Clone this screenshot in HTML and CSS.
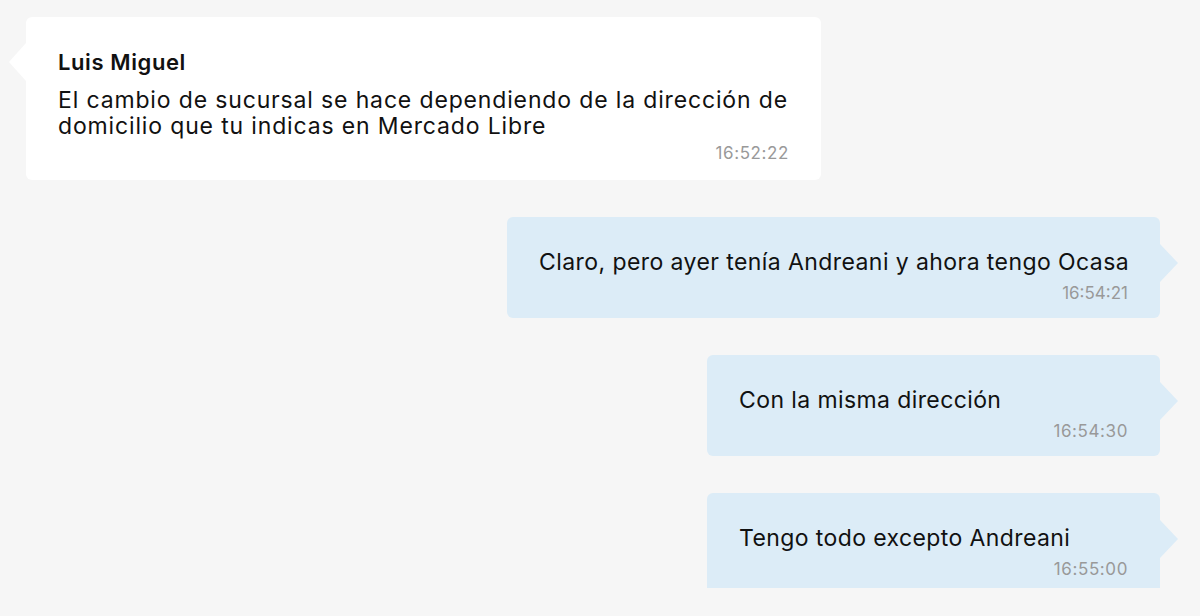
FILE: index.html
```html
<!DOCTYPE html>
<html lang="es">
<head>
    <meta charset="UTF-8">
    <meta name="viewport" content="width=device-width, initial-scale=1.0">
    <title>Conversación</title>
    <link rel="stylesheet" href="styles.css">
</head>
<body>
    <div class="chat">
        <div class="msg msg-in">
            <div class="autor">Luis Miguel</div>
            <div class="texto">El cambio de sucursal se hace dependiendo de la dirección de<br>domicilio que tu indicas en Mercado Libre</div>
            <div class="hora">16:52:22</div>
        </div>

        <div class="msg msg-out msg-largo">
            <div class="texto">Claro, pero ayer tenía Andreani y ahora tengo Ocasa</div>
            <div class="hora">16:54:21</div>
        </div>

        <div class="msg msg-out">
            <div class="texto">Con la misma dirección</div>
            <div class="hora">16:54:30</div>
        </div>

        <div class="msg msg-out msg-cortado">
            <div class="texto">Tengo todo excepto Andreani</div>
            <div class="hora">16:55:00</div>
        </div>
    </div>
</body>
</html>
```

FILE: styles.css
```css
body {
    margin: 0;
    background: #f6f6f6;
    font-family: Inter, "Open Sans", sans-serif;
    color: #111111;
    height: 616px;
    overflow: hidden;
}

.chat {
    display: flex;
    flex-direction: column;
    gap: 37px;
    padding: 17px 40px 0 26px;
}

.msg {
    position: relative;
    border-radius: 6px;
    padding: 31px 32px 15px 32px;
    box-sizing: border-box;
}

/* la colita del globo */
.msg::before {
    content: "";
    position: absolute;
    top: 27px;
    border-top: 19px solid transparent;
    border-bottom: 19px solid transparent;
}

.msg-in {
    align-self: flex-start;
    width: 795px;
    background: #ffffff;
    padding: 32px 32px 17px 32px;
}

.msg-in::before {
    left: -17px;
    top: 26px;
    border-right: 17px solid #ffffff;
}

.msg-out {
    align-self: flex-end;
    width: 453px;
    background: #dcecf7;
}

.msg-out::before {
    right: -18px;
    border-left: 18px solid #dcecf7;
}

.msg-largo {
    width: 653px;
}

.msg-largo .texto {
    white-space: nowrap;
    letter-spacing: 0.42px;
}

.msg-largo .hora {
    letter-spacing: 0;
}

.msg-cortado {
    height: 95px;
    border-radius: 6px 6px 0 0;
}

.autor {
    font-weight: 600;
    font-size: 22px;
    letter-spacing: 0.6px;
    line-height: 26px;
    margin-bottom: 12px;
}

.texto {
    font-size: 23px;
    letter-spacing: 0.4px;
    line-height: 28px;
}

.msg-in .texto {
    letter-spacing: 0.85px;
    line-height: 26px;
}

.hora {
    text-align: right;
    color: #999999;
    font-size: 17px;
    letter-spacing: 0.6px;
    line-height: 20px;
    margin-top: 7px;
}

.msg-in .hora {
    margin-top: 4px;
}
```
